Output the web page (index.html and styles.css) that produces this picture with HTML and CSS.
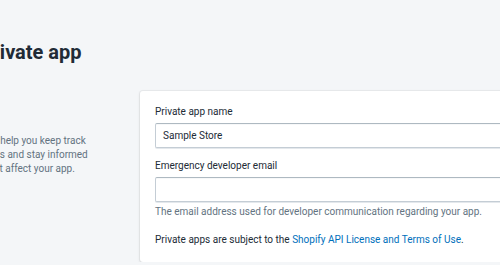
FILE: index.html
```html
<!DOCTYPE html>
<html lang="en">
<head>
<meta charset="utf-8">
<title>Create private app</title>
<link rel="stylesheet" href="styles.css">
</head>
<body>
<div class="page">
  <header class="page-header">
    <h1 class="title">Create private app</h1>
  </header>
  <div class="section">
    <div class="annotation">
      <h2 class="annotation-title">App details</h2>
      <p class="annotation-text">These records will help you keep track of your private apps and stay informed about changes that affect your app.</p>
    </div>
    <div class="card">
      <div class="field">
        <label class="label" for="name">Private app name</label>
        <div class="input"><input id="name" type="text" value="Sample Store"></div>
      </div>
      <div class="field">
        <label class="label" for="email">Emergency developer email</label>
        <div class="input"><input id="email" type="email" value=""></div>
        <p class="help">The email address used for developer communication regarding your app.</p>
      </div>
      <p class="terms">Private apps are subject to the <a class="link" href="#">Shopify API License and Terms of Use</a>.</p>
    </div>
  </div>
</div>
</body>
</html>
```

FILE: styles.css
```css
html, body {
  margin: 0;
  padding: 0;
  background: #f4f6f8;
  overflow: hidden;
}

body {
  font-family: Roboto, "Noto Sans", sans-serif;
  color: #212b36;
  font-size: 10px;
  line-height: 14px;
}

.page {
  margin-left: -82px;
  padding-top: 40px;
  width: 900px;
}

.title {
  margin: 0 0 0 -1px;
  font-size: 20px;
  line-height: 24px;
  font-weight: 700;
  color: #212b36;
}

.section {
  display: flex;
  gap: 20px;
  margin-top: 27px;
}

.annotation {
  width: 202px;
  flex: none;
  padding-top: 14px;
}

.annotation-title {
  margin: 0;
  font-size: 12px;
  line-height: 16px;
  font-weight: 600;
}

.annotation-text {
  margin: 13px 0 0 -1px;
  width: 174px;
  color: #637381;
}

.card {
  flex: 1;
  background: #fff;
  border-radius: 3px;
  box-shadow: 0 0 0 1px rgba(63, 63, 68, 0.05), 0 1px 3px 0 rgba(63, 63, 68, 0.15);
  padding: 14px 15px 15px;
}

.field + .field {
  margin-top: 11px;
}

.label {
  display: block;
  margin-bottom: 4px;
}

.input {
  height: 25px;
  box-sizing: border-box;
  border: 1px solid #c4cdd5;
  border-top-color: #aeb9c1;
  border-radius: 2px;
  box-shadow: inset 0 1px 0 0 rgba(99, 115, 129, 0.05), 0 1px 0 0 rgba(196, 205, 213, 0.45);
  background: #fff;
}

.input input {
  display: block;
  width: 100%;
  height: 100%;
  box-sizing: border-box;
  border: 0;
  outline: 0;
  background: transparent;
  padding: 0 7px;
  font: inherit;
  color: #212b36;
}

.help {
  margin: 3px 0 0;
  color: #637381;
}

.terms {
  margin: 14px 0 0;
}

.link {
  color: #006fbb;
  text-decoration: none;
}
```
